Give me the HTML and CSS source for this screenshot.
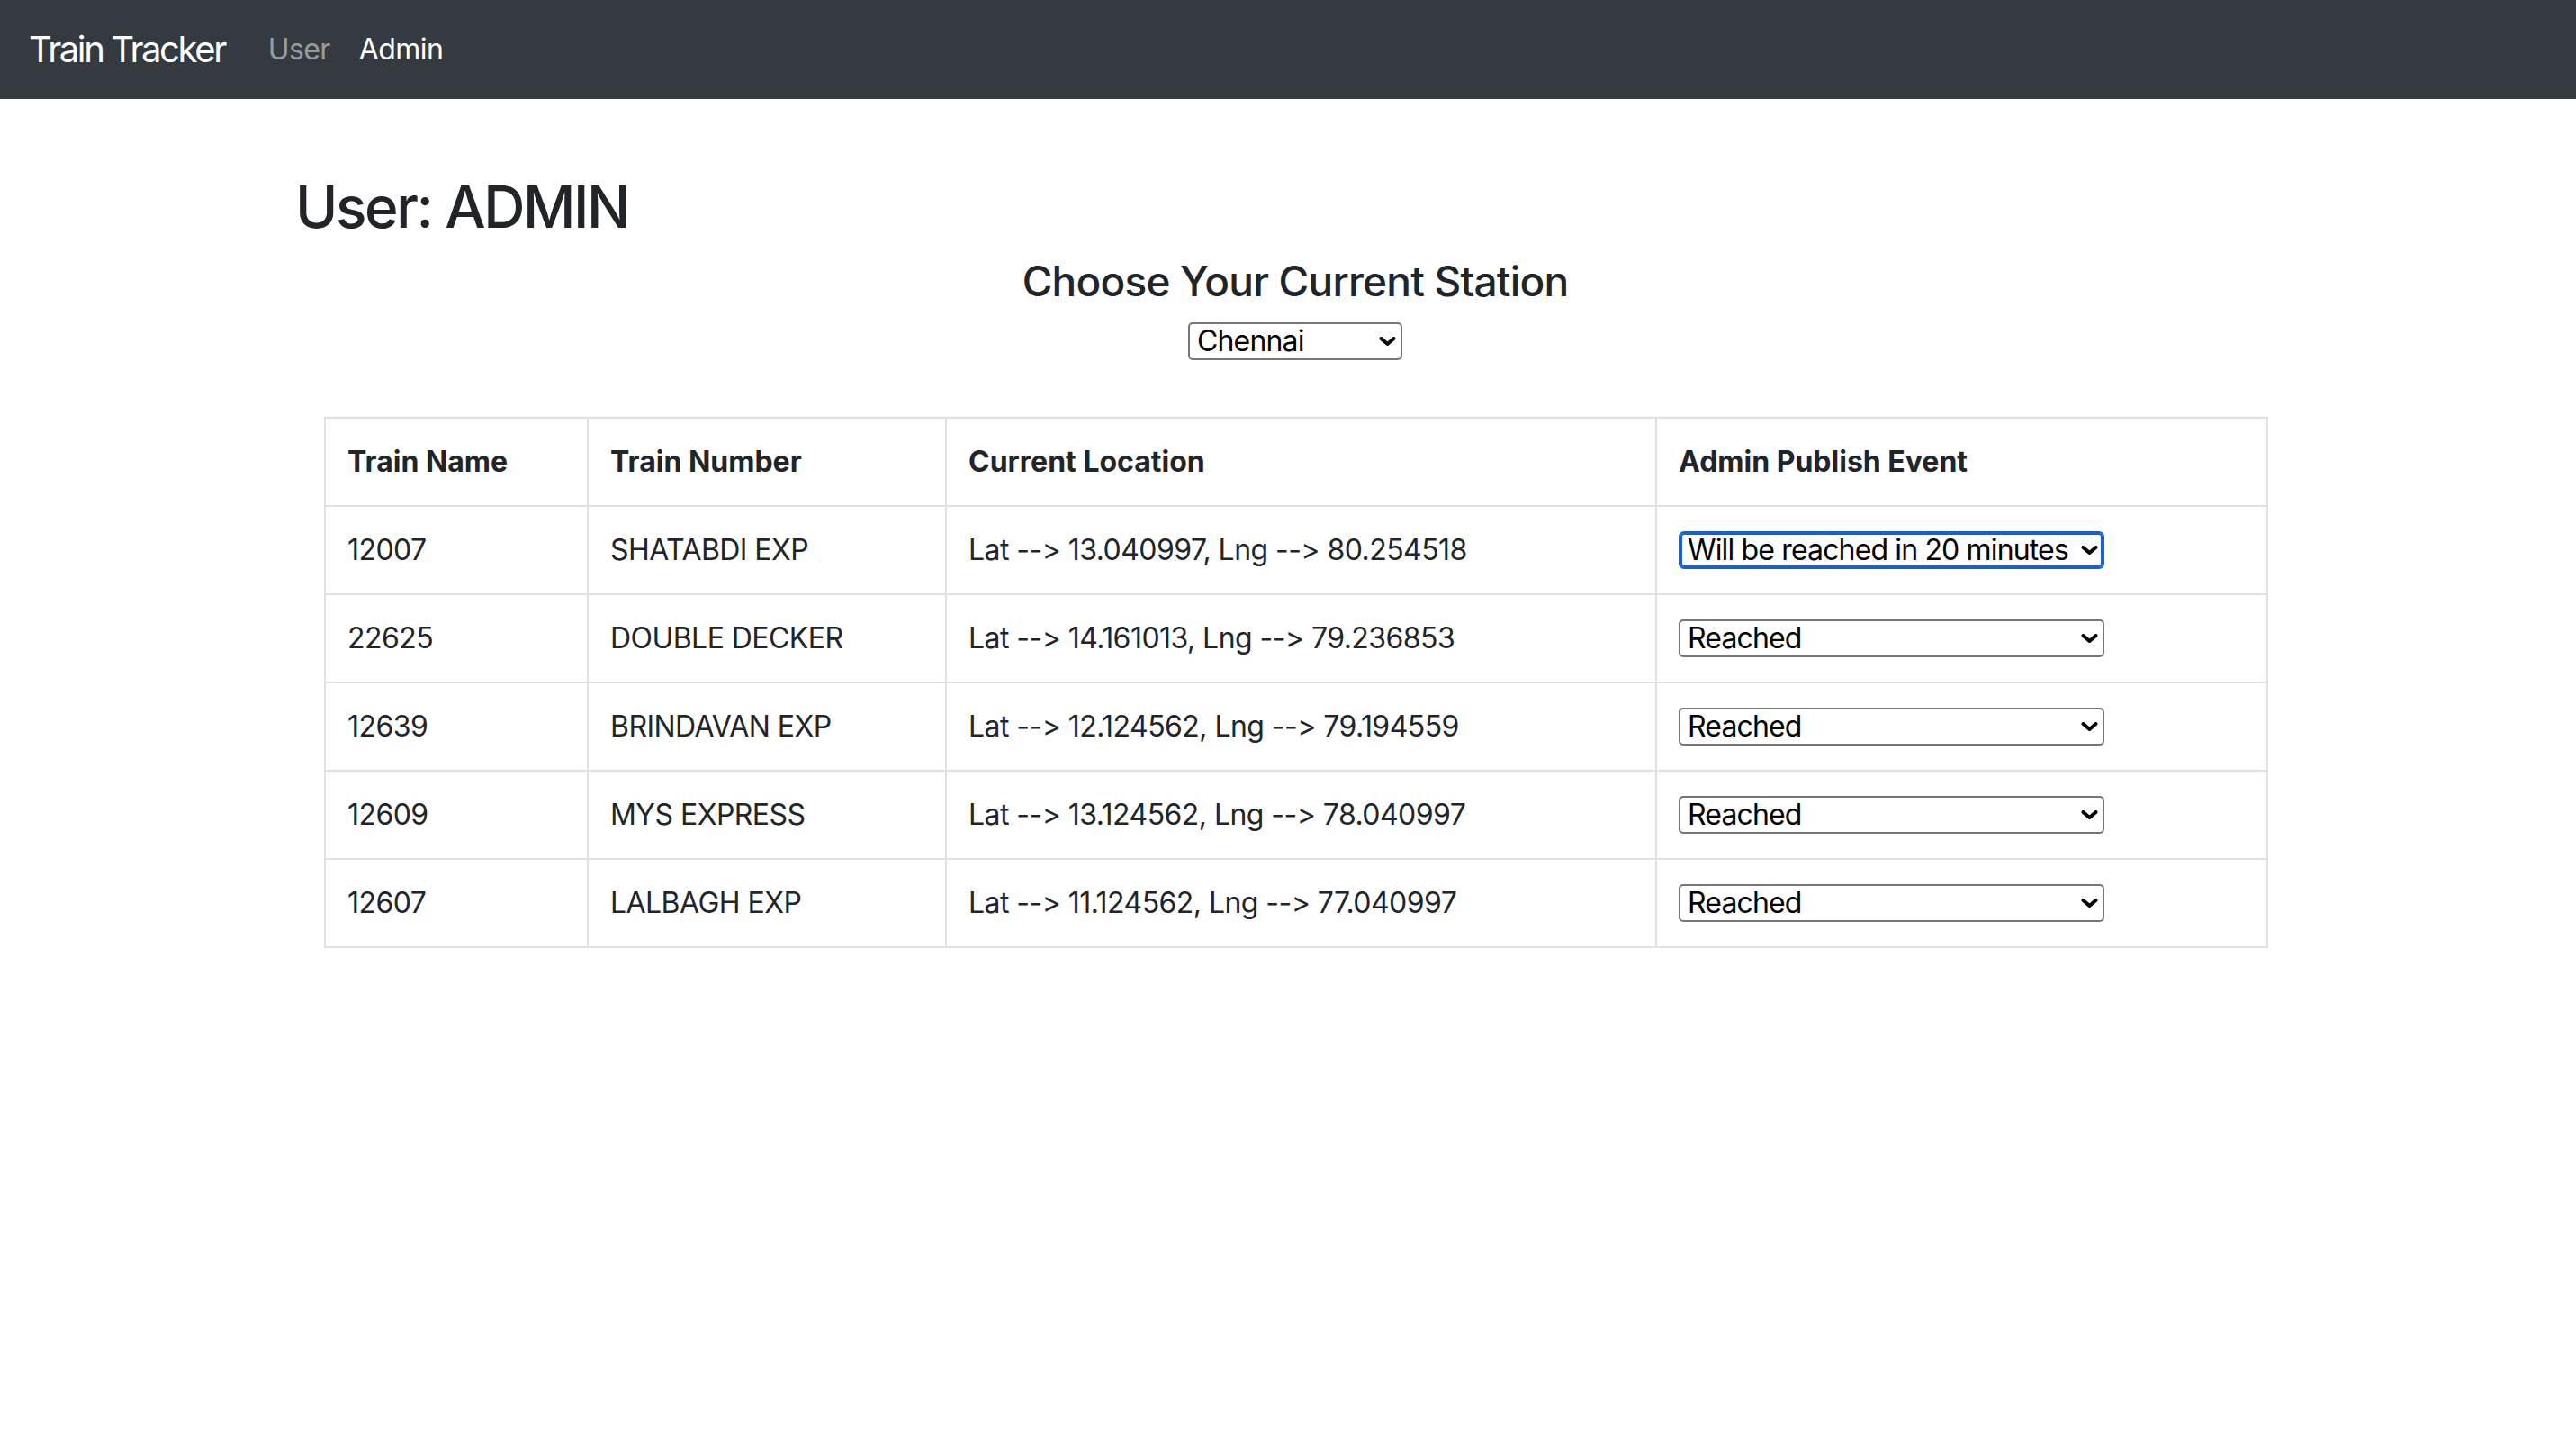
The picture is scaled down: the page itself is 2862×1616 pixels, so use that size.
FILE: index.html
```html
<!DOCTYPE html>
<html lang="en">
<head>
<meta charset="utf-8">
<title>Train Tracker</title>
<link rel="stylesheet" href="styles.css">
</head>
<body>
<nav class="navbar">
  <a class="brand" href="#">Train Tracker</a>
  <ul class="nav">
    <li><a class="nav-link" href="#">User</a></li>
    <li><a class="nav-link active" href="#">Admin</a></li>
  </ul>
</nav>
<main class="container">
  <h1 class="page-title">User: ADMIN</h1>
  <section class="panel">
    <h4 class="station-title">Choose Your Current Station</h4>
    <div class="select-wrap station-select">
      <select class="select">
        <option>Chennai</option>
        <option>Bangalore</option>
        <option>Mysore</option>
      </select>
      <svg class="chev" viewBox="0 0 19 10" aria-hidden="true"><polyline points="2.5,2 9.5,8 16.5,2"/></svg>
    </div>
    <table class="trains">
      <colgroup>
        <col class="c1"><col class="c2"><col class="c3"><col class="c4">
      </colgroup>
      <thead>
        <tr><th>Train Name</th><th>Train Number</th><th>Current Location</th><th>Admin Publish Event</th></tr>
      </thead>
      <tbody>
        <tr>
          <td>12007</td><td>SHATABDI EXP</td><td>Lat --&gt; 13.040997, Lng --&gt; 80.254518</td>
          <td><div class="select-wrap event-select"><select class="select focused"><option>Will be reached in 20 minutes</option><option>Reached</option></select><svg class="chev" viewBox="0 0 19 10" aria-hidden="true"><polyline points="2.5,2 9.5,8 16.5,2"/></svg></div></td>
        </tr>
        <tr>
          <td>22625</td><td>DOUBLE DECKER</td><td>Lat --&gt; 14.161013, Lng --&gt; 79.236853</td>
          <td><div class="select-wrap event-select"><select class="select"><option>Reached</option><option>Will be reached in 20 minutes</option></select><svg class="chev" viewBox="0 0 19 10" aria-hidden="true"><polyline points="2.5,2 9.5,8 16.5,2"/></svg></div></td>
        </tr>
        <tr>
          <td>12639</td><td>BRINDAVAN EXP</td><td>Lat --&gt; 12.124562, Lng --&gt; 79.194559</td>
          <td><div class="select-wrap event-select"><select class="select"><option>Reached</option><option>Will be reached in 20 minutes</option></select><svg class="chev" viewBox="0 0 19 10" aria-hidden="true"><polyline points="2.5,2 9.5,8 16.5,2"/></svg></div></td>
        </tr>
        <tr>
          <td>12609</td><td>MYS EXPRESS</td><td>Lat --&gt; 13.124562, Lng --&gt; 78.040997</td>
          <td><div class="select-wrap event-select"><select class="select"><option>Reached</option><option>Will be reached in 20 minutes</option></select><svg class="chev" viewBox="0 0 19 10" aria-hidden="true"><polyline points="2.5,2 9.5,8 16.5,2"/></svg></div></td>
        </tr>
        <tr>
          <td>12607</td><td>LALBAGH EXP</td><td>Lat --&gt; 11.124562, Lng --&gt; 77.040997</td>
          <td><div class="select-wrap event-select"><select class="select"><option>Reached</option><option>Will be reached in 20 minutes</option></select><svg class="chev" viewBox="0 0 19 10" aria-hidden="true"><polyline points="2.5,2 9.5,8 16.5,2"/></svg></div></td>
        </tr>
      </tbody>
    </table>
  </section>
</main>
</body>
</html>
```
FILE: styles.css
```css
* { box-sizing: border-box; }

body {
  margin: 0;
  font-family: Inter, "Noto Sans", "Liberation Sans", sans-serif;
  font-size: 32px;
  line-height: 1.5;
  color: #212529;
  background: #fff;
  font-feature-settings: "calt" 0, "liga" 0;
  font-variant-ligatures: none;
}

.navbar {
  display: flex;
  align-items: center;
  height: 110px;
  padding: 0 32px;
  background: #343a40;
}

.brand {
  font-size: 40px;
  line-height: 60px;
  color: #fff;
  text-decoration: none;
  margin-right: 32px;
  letter-spacing: -2.4px;
}

.nav {
  display: flex;
  list-style: none;
  margin: 0;
  padding: 0;
}

.nav-link {
  display: block;
  padding: 0 16px;
  line-height: 48px;
  color: rgba(255, 255, 255, 0.5);
  text-decoration: none;
  letter-spacing: -0.6px;
}

.nav-link.active { color: #fff; }

.container {
  width: 2220px;
  margin: 0 auto;
}

.page-title {
  font-size: 64px;
  font-weight: 500;
  line-height: 1.2;
  margin: 82px 0 16px 7px;
  letter-spacing: -2.4px;
}

.panel {
  margin-left: 39px;
  width: 2158px;
}

.station-title {
  font-size: 46px;
  font-weight: 500;
  line-height: 1.2;
  text-align: center;
  margin: 0 0 18px;
  letter-spacing: -0.8px;
}

.select-wrap {
  position: relative;
}

.station-select {
  width: 238px;
  margin: 0 auto;
}

.event-select {
  width: 473px;
  margin: 3px 0;
}

.select {
  display: block;
  width: 100%;
  height: 42px;
  margin: 0;
  padding: 0 36px 0 8px;
  font-family: Inter, "Noto Sans", "Liberation Sans", sans-serif;
  font-size: 32px;
  line-height: 38px;
  letter-spacing: -0.85px;
  color: #000;
  background: #fff;
  border: 2px solid #767676;
  border-radius: 5px;
  -webkit-appearance: none;
  appearance: none;
  font-feature-settings: "calt" 0;
}

.select.focused {
  border-color: #1a5fd0;
  box-shadow: inset 0 0 0 2px #1a5fd0;
  border-radius: 6px;
}

.chev {
  position: absolute;
  right: 7px;
  top: 16px;
  width: 19px;
  height: 10px;
  pointer-events: none;
  fill: none;
  stroke: #000;
  stroke-width: 4;
  stroke-linecap: round;
  stroke-linejoin: round;
}

.trains {
  width: 100%;
  margin-top: 63px;
  border-collapse: collapse;
  table-layout: fixed;
}

.c1 { width: 292px; }
.c2 { width: 398px; }
.c3 { width: 789px; }
.c4 { width: 679px; }

.trains th,
.trains td {
  border: 2px solid #dee2e6;
  padding: 24px 24px;
  line-height: 48px;
  text-align: left;
  vertical-align: middle;
  white-space: nowrap;
}

.trains td { letter-spacing: -0.55px; }

.trains th { font-weight: 700; }
```
